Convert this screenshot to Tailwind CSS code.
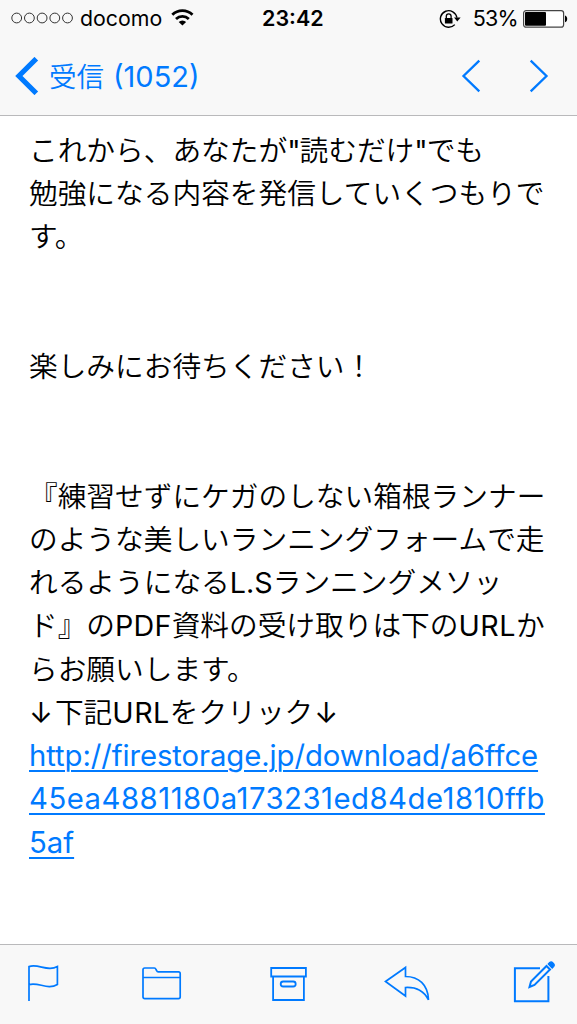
<!DOCTYPE html>
<html lang="ja">

<head>
    <meta charset="UTF-8">
    <meta name="viewport" content="width=device-width, initial-scale=1.0">
    <title>受信 (1052)</title>
    <script src="https://cdn.jsdelivr.net/npm/@tailwindcss/browser@4"></script>
</head>

<body class="bg-white font-['Inter','Noto_Sans_CJK_JP',sans-serif] text-black">
    <div class="flex h-screen w-full flex-col overflow-hidden">
        <header class="h-[116px] shrink-0 border-b border-[#b9b9bb] bg-[#f8f8f8]">
            <!-- Status bar -->
            <div class="flex h-[37px] items-center pl-[11px] pr-[9px]">
                <div class="flex w-[251px] items-center">
                    <svg class="shrink-0" width="63" height="12" viewBox="0 0 63 12" fill="none" stroke="#333" stroke-width="1">
                        <circle cx="5.7" cy="6" r="4.9" />
                        <circle cx="18.4" cy="6" r="4.9" />
                        <circle cx="31.1" cy="6" r="4.9" />
                        <circle cx="43.8" cy="6" r="4.9" />
                        <circle cx="56.5" cy="6" r="4.9" />
                    </svg>
                    <span class="ml-[6px] w-[82px] text-[21.3px] leading-none">docomo</span>
                    <svg class="ml-[9px] shrink-0" width="23" height="18" viewBox="0 0 23 18" fill="none" stroke="#000" stroke-width="2.8">
                        <path d="M1.3 5.8a14.4 14.4 0 0 1 20.2 0" />
                        <path d="M5 9.9a9.2 9.2 0 0 1 12.8 0" />
                        <path d="M11.4 16.6 7.7 13a5.2 5.2 0 0 1 7.4 0z" fill="#000" stroke="none" />
                    </svg>
                </div>
                <span class="text-[21.5px] font-semibold leading-none">23:42</span>
                <div class="ml-auto flex items-center">
                    <svg width="22" height="20" viewBox="0 0 22 20">
                        <path d="M15.8 15.6a8.3 8.3 0 1 1 2.1-6.9" fill="none" stroke="#000" stroke-width="1.4" />
                        <path d="M15 8.6h6.6L18.3 12.4z" />
                        <rect x="5.9" y="9" width="7.6" height="5.6" rx=".6" />
                        <path d="M7.3 9.4V7.3a2.4 2.4 0 0 1 4.8 0v2.1" fill="none" stroke="#000" stroke-width="1.3" />
                    </svg>
                    <span class="ml-[12px] text-[21.5px] leading-none tracking-[-0.7px]">53%</span>
                    <svg class="ml-[5px]" width="45" height="18" viewBox="0 0 45 18">
                        <rect x=".6" y=".6" width="40" height="16.6" rx="2.5" fill="#fff" stroke="#444" stroke-width="1.2" />
                        <rect x="2" y="2" width="21" height="13.8" rx="1" />
                        <path d="M42 5.5c1.6.6 2.2 2 2.2 3.4s-.6 2.8-2.2 3.4z" />
                    </svg>
                </div>
            </div>
            <!-- Navigation bar -->
            <div class="flex h-[78px] items-center pl-[15px] pr-[28px] text-[#007aff]">
                <svg width="24" height="38" viewBox="0 0 24 38" fill="none" stroke="currentColor" stroke-width="5.2">
                    <path d="M21.3 1.7 3.9 19 21.3 36.3" />
                </svg>
                <div class="ml-[10px] flex items-baseline pt-[1px] leading-none">
                    <span class="text-[27.5px] font-[350]">受信</span>
                    <span class="ml-[9px] text-[29px]">(1052)</span>
                </div>
                <svg class="ml-auto" width="20" height="34" viewBox="0 0 20 34" fill="none" stroke="currentColor" stroke-width="2.3">
                    <path d="M18.3 1.6 2.5 17l15.8 15.4" />
                </svg>
                <svg class="ml-[48px]" width="20" height="34" viewBox="0 0 20 34" fill="none" stroke="currentColor" stroke-width="2.3">
                    <path d="M1.7 1.6 17.5 17 1.7 32.4" />
                </svg>
            </div>
        </header>

        <!-- Message -->
        <main class="flex-1 whitespace-nowrap pl-[29px] pt-[12.5px] text-[28.7px] font-[350] leading-[43.25px]">
            <p>これから、あなたが<span class="font-normal tracking-[-1px]">"</span>読むだけ<span class="font-normal tracking-[-1px]">"</span>でも</p>
            <p>勉強になる内容を発信していくつもりで</p>
            <p>す。</p>
            <p class="mt-[86.5px]">楽しみにお待ちください！</p>
            <p class="mt-[86.5px]">『練習せずにケガのしない箱根ランナー</p>
            <p>のような美しいランニングフォームで走</p>
            <p>れるようになる<span class="font-normal">L.S</span>ランニングメソッ</p>
            <p>ド』の<span class="font-normal tracking-[0.2px]">PDF</span>資料の受け取りは下の<span class="font-normal tracking-[0.5px]">URL</span>か</p>
            <p>らお願いします。</p>
            <p><span class="font-normal tracking-[2px]">↓</span>下記<span class="font-normal tracking-[0.5px]">URL</span>をクリック<span class="ml-[1px] font-normal">↓</span></p>
            <a href="#" class="block text-[29.3px] font-normal text-[#007aff] underline decoration-2 underline-offset-4">
                <span class="tracking-[-0.08px]">http://firestorage.jp/download/a6ffce</span><br>
                <span class="tracking-[0.5px]">45ea4881180a173231ed84de1810ffb</span><br>
                <span>5af</span>
            </a>
        </main>

        <!-- Toolbar -->
        <footer class="flex h-[80px] shrink-0 items-start border-t border-[#b9b9bb] bg-[#f8f8f8] pl-[26px] pt-[15px] text-[#007aff]">
            <svg width="34" height="44" viewBox="0 0 34 44" fill="none" stroke="currentColor" stroke-width="1.7">
                <path d="M3 41V6.6c9-3.4 18.5 5.5 28.4 0v17.8c-10 6-19-2.8-28.4.2" />
            </svg>
            <svg class="ml-[81px]" width="42" height="44" viewBox="0 0 42 44" fill="none" stroke="currentColor" stroke-width="1.7">
                <path d="M2 37V9.7Q2 8 3.7 8h9.6Q14.5 8 15 9.5l.7 1.3q.4 1 1.5 1h20.3q1.7 0 1.7 1.7V37q0 1.6-1.7 1.6H3.7Q2 38.6 2 37zM2 17.5h37.2" />
            </svg>
            <svg class="ml-[87px]" width="38" height="44" viewBox="0 0 38 44" fill="none" stroke="currentColor" stroke-width="1.8">
                <path d="M1.2 8h34.7v8.5H1.2zM3.1 16.5h30.8V40H3.1z" />
                <rect x="10.7" y="21.5" width="15" height="5" rx="2.5" />
            </svg>
            <svg class="ml-[76px]" width="46" height="44" viewBox="0 0 46 44" fill="none" stroke="currentColor" stroke-width="1.7">
                <path d="M1.5 21.500 21.500 7.500v9c13 0 22.500 8 23 23.300-5-9.500-12-12.800-23-12.300v8.500z" />
            </svg>
            <svg class="ml-[82px]" width="44" height="44" viewBox="0 0 44 44" fill="none" stroke="currentColor" stroke-width="2">
                <path d="M28 8.300H2.900v33h33.500V16" />
                <path d="M17.500 27 19 21.500 34.500 6l3.500 3.500L22.500 25z" />
                <path d="M36.300 4l1.400-1.400q1.600-1.300 3.200.3l.5.500q1.600 1.600.2 3.200L40.200 8z" fill="currentColor" stroke-width="1.300" />
            </svg>
        </footer>
    </div>
</body>

</html>
